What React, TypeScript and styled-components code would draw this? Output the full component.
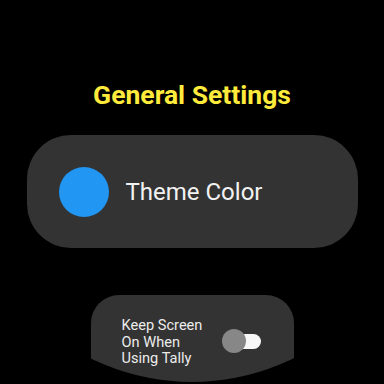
import React, {useState} from 'react'
import styled, {createGlobalStyle} from 'styled-components'

const GlobalStyle = createGlobalStyle`
  html, body {
    margin: 0;
    padding: 0;
    background: #000;
  }
  body {
    font-family: Roboto, "Liberation Sans", sans-serif;
  }
`

const Screen = styled.div`
  width: 384px;
  height: 384px;
  overflow: hidden;
  background: #000;
  display: flex;
  flex-direction: column;
  align-items: center;
  padding-top: 80px;
  box-sizing: border-box;
`

const Title = styled.h1`
  margin: 0;
  font-size: 26.5px;
  line-height: 30px;
  font-weight: 700;
  color: #ffeb3b;
`

const ColorChip = styled.div`
  margin-top: 25px;
  width: 331px;
  height: 113px;
  flex-shrink: 0;
  box-sizing: border-box;
  padding-left: 32px;
  border-radius: 44px;
  background: #333333;
  display: flex;
  align-items: center;
  gap: 17px;
`

const Swatch = styled.div<{$color: string}>`
  width: 50px;
  height: 50px;
  border-radius: 50%;
  background: ${({$color}) => $color};
  flex-shrink: 0;
`

const ChipLabel = styled.span`
  font-size: 24px;
  line-height: 28px;
  color: #f2f2f2;
`

const ToggleChip = styled.div`
  margin-top: 47px;
  width: 203px;
  height: 90px;
  flex-shrink: 0;
  box-sizing: border-box;
  padding: 22px 33px 0 31px;
  border-radius: 28px 28px 0 0;
  background: #333333;
  display: flex;
  align-items: flex-start;
  justify-content: space-between;
  clip-path: circle(229px at 101.5px -142px);
`

const ToggleLabel = styled.span`
  width: 94px;
  font-size: 14.6px;
  line-height: 16.5px;
  color: #ececec;
`

const Switch = styled.button<{$on: boolean}>`
  position: relative;
  margin-top: 12px;
  width: 39px;
  height: 24px;
  padding: 0;
  border: none;
  background: transparent;
  cursor: pointer;

  &::before {
    content: '';
    position: absolute;
    left: 5px;
    right: 0;
    top: 4.5px;
    height: 15px;
    border-radius: 7.5px;
    background: ${({$on}) => ($on ? '#2196f3' : '#f7f7f7')};
  }

  &::after {
    content: '';
    position: absolute;
    top: 0;
    left: ${({$on}) => ($on ? '15px' : '0')};
    width: 24px;
    height: 24px;
    border-radius: 50%;
    background: #878787;
  }
`

export default function App() {
  const [keepOn, setKeepOn] = useState(false)

  return (
    <>
      <GlobalStyle />
      <Screen>
        <Title>General Settings</Title>
        <ColorChip>
          <Swatch $color='#2196f3' />
          <ChipLabel>Theme Color</ChipLabel>
        </ColorChip>
        <ToggleChip>
          <ToggleLabel>Keep Screen On When Using Tally</ToggleLabel>
          <Switch
            $on={keepOn}
            aria-label='Keep screen on'
            onClick={() => setKeepOn(v => !v)}
          />
        </ToggleChip>
      </Screen>
    </>
  )
}
